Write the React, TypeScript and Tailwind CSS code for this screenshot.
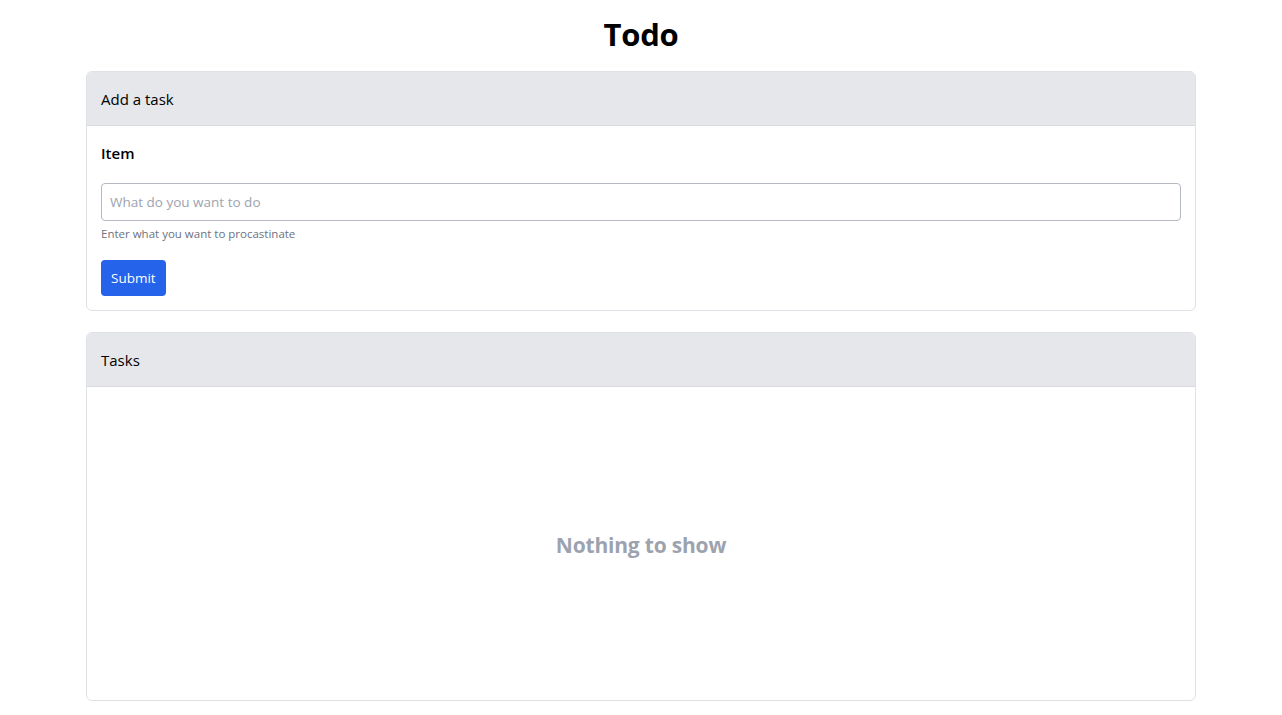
export default function App() {
  return (
    <div className="min-h-screen bg-white font-['Open_Sans',sans-serif] text-black">
      <div className="mx-auto w-[1110px] pt-[15px] pb-4">
        <h1 className="text-center text-[31px] font-bold leading-[38px] tracking-[-0.3px]">
          Todo
        </h1>

        <div className="mt-[18px] rounded-md border border-[#dee2e6] overflow-hidden">
          <div className="bg-[#e5e7eb] border-b border-[#d9dbe0] px-[14px] pt-[15px] pb-[14px] text-[15px] font-medium leading-6">
            Add a task
          </div>
          <div className="px-[14px] pt-[15px] pb-[14px]">
            <label className="block text-[15px] font-semibold leading-6">Item</label>
            <input
              type="text"
              placeholder="What do you want to do"
              className="mt-[18px] block w-full h-[38px] rounded border border-[#b4b8c0] px-2 text-[13.5px] placeholder:text-[#9ca3af] outline-none"
            />
            <div className="mt-1 text-[11.5px] leading-[18px] text-[#6b7280]">
              Enter what you want to procastinate
            </div>
            <button className="mt-[17px] h-9 rounded bg-[#2563eb] px-[10px] text-[13.5px] text-white">
              Submit
            </button>
          </div>
        </div>

        <div className="mt-[21px] rounded-md border border-[#dee2e6] overflow-hidden">
          <div className="bg-[#e5e7eb] border-b border-[#d9dbe0] px-[14px] pt-[15px] pb-[14px] text-[15px] font-medium leading-6">
            Tasks
          </div>
          <div className="flex h-[313px] items-center justify-center pt-1">
            <span className="text-[21px] font-bold text-[#9ca3af] tracking-[-0.2px]">
              Nothing to show
            </span>
          </div>
        </div>
      </div>
    </div>
  );
}
